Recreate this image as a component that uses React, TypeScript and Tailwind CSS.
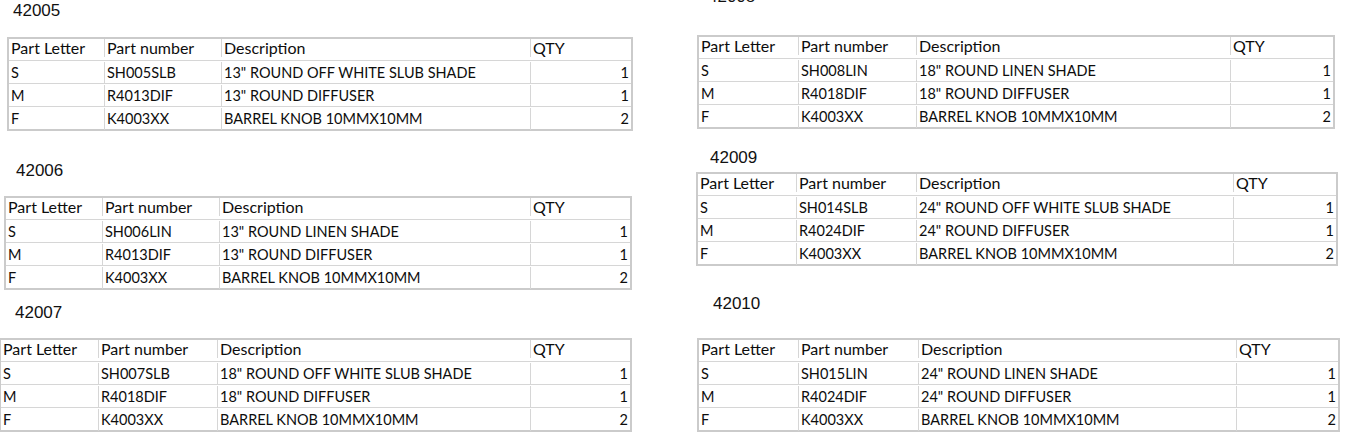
import React from "react";

type Row = { letter: string; part: string; desc: string; qty: number };

type Sheet = {
  code: string;
  wrap: string;
  title: string;
  table: string;
  cols: string;
  rows: Row[];
};

const knob: Row = { letter: "F", part: "K4003XX", desc: "BARREL KNOB 10MMX10MM", qty: 2 };

const left: Sheet[] = [
  {
    code: "42005",
    wrap: "mt-[1px]",
    title: "pl-[13px]",
    table: "mt-[16px] ml-[7px] w-[626px]",
    cols: "grid-cols-[96px_117px_309px_1fr]",
    rows: [
      { letter: "S", part: "SH005SLB", desc: '13" ROUND OFF WHITE SLUB SHADE', qty: 1 },
      { letter: "M", part: "R4013DIF", desc: '13" ROUND DIFFUSER', qty: 1 },
      knob,
    ],
  },
  {
    code: "42006",
    wrap: "mt-[30px]",
    title: "pl-[16px]",
    table: "mt-[15px] ml-[4px] w-[628px]",
    cols: "grid-cols-[97px_117px_311px_1fr]",
    rows: [
      { letter: "S", part: "SH006LIN", desc: '13" ROUND LINEN SHADE', qty: 1 },
      { letter: "M", part: "R4013DIF", desc: '13" ROUND DIFFUSER', qty: 1 },
      knob,
    ],
  },
  {
    code: "42007",
    wrap: "mt-[13px]",
    title: "pl-[15px]",
    table: "mt-[15px] ml-[-1px] w-[633px]",
    cols: "grid-cols-[98px_119px_313px_1fr]",
    rows: [
      { letter: "S", part: "SH007SLB", desc: '18" ROUND OFF WHITE SLUB SHADE', qty: 1 },
      { letter: "M", part: "R4018DIF", desc: '18" ROUND DIFFUSER', qty: 1 },
      knob,
    ],
  },
];

const right: Sheet[] = [
  {
    code: "42008",
    wrap: "mt-[-13px]",
    title: "pl-[18px]",
    table: "mt-[28px] ml-[7px] w-[638px]",
    cols: "grid-cols-[100px_118px_314px_1fr]",
    rows: [
      { letter: "S", part: "SH008LIN", desc: '18" ROUND LINEN SHADE', qty: 1 },
      { letter: "M", part: "R4018DIF", desc: '18" ROUND DIFFUSER', qty: 1 },
      knob,
    ],
  },
  {
    code: "42009",
    wrap: "mt-[19px]",
    title: "pl-[20px]",
    table: "mt-[4px] ml-[6px] w-[642px]",
    cols: "grid-cols-[99px_120px_317px_1fr]",
    rows: [
      { letter: "S", part: "SH014SLB", desc: '24" ROUND OFF WHITE SLUB SHADE', qty: 1 },
      { letter: "M", part: "R4024DIF", desc: '24" ROUND DIFFUSER', qty: 1 },
      knob,
    ],
  },
  {
    code: "42010",
    wrap: "mt-[28px]",
    title: "pl-[23px]",
    table: "mt-[24px] ml-[7px] w-[643px]",
    cols: "grid-cols-[100px_120px_318px_1fr]",
    rows: [
      { letter: "S", part: "SH015LIN", desc: '24" ROUND LINEN SHADE', qty: 1 },
      { letter: "M", part: "R4024DIF", desc: '24" ROUND DIFFUSER', qty: 1 },
      knob,
    ],
  },
];

const cell = "flex items-center px-[2px] border-r border-[#d6d6d6] overflow-hidden whitespace-nowrap";

function PartsTable({ s }: { s: Sheet }) {
  return (
    <div className={s.wrap}>
      <div className={`${s.title} h-[20px] leading-[20px] text-[17px] font-['Liberation_Sans',Arial,sans-serif] text-[#111]`}>
        {s.code}
      </div>
      <div className={`${s.table} border-2 border-[#cbcbcb] bg-white font-['Lato',sans-serif] text-[#0d0d0d]`}>
        <div className={`grid ${s.cols} h-[22px] pb-[3px] border-b border-[#d6d6d6] text-[16px] leading-[18px]`}>
          <div className={cell}>Part Letter</div>
          <div className={cell}>Part number</div>
          <div className={cell}>Description</div>
          <div className="flex items-center px-[2px]">QTY</div>
        </div>
        {s.rows.map((r, i) => (
          <div
            key={r.letter}
            className={`grid ${s.cols} pt-[1px] text-[14.5px] ${
              i === s.rows.length - 1 ? "h-[22px]" : "h-[23px] border-b border-[#d6d6d6]"
            }`}
          >
            <div className={cell}>{r.letter}</div>
            <div className={cell}>{r.part}</div>
            <div className={cell}>{r.desc}</div>
            <div className="flex items-center justify-end px-[2px]">{r.qty}</div>
          </div>
        ))}
      </div>
    </div>
  );
}

export default function App() {
  return (
    <div className="w-[1352px] h-[442px] overflow-hidden bg-white flex">
      <div className="w-[690px] shrink-0 flex flex-col">
        {left.map((s) => (
          <PartsTable key={s.code} s={s} />
        ))}
      </div>
      <div className="flex-1 flex flex-col">
        {right.map((s) => (
          <PartsTable key={s.code} s={s} />
        ))}
      </div>
    </div>
  );
}
